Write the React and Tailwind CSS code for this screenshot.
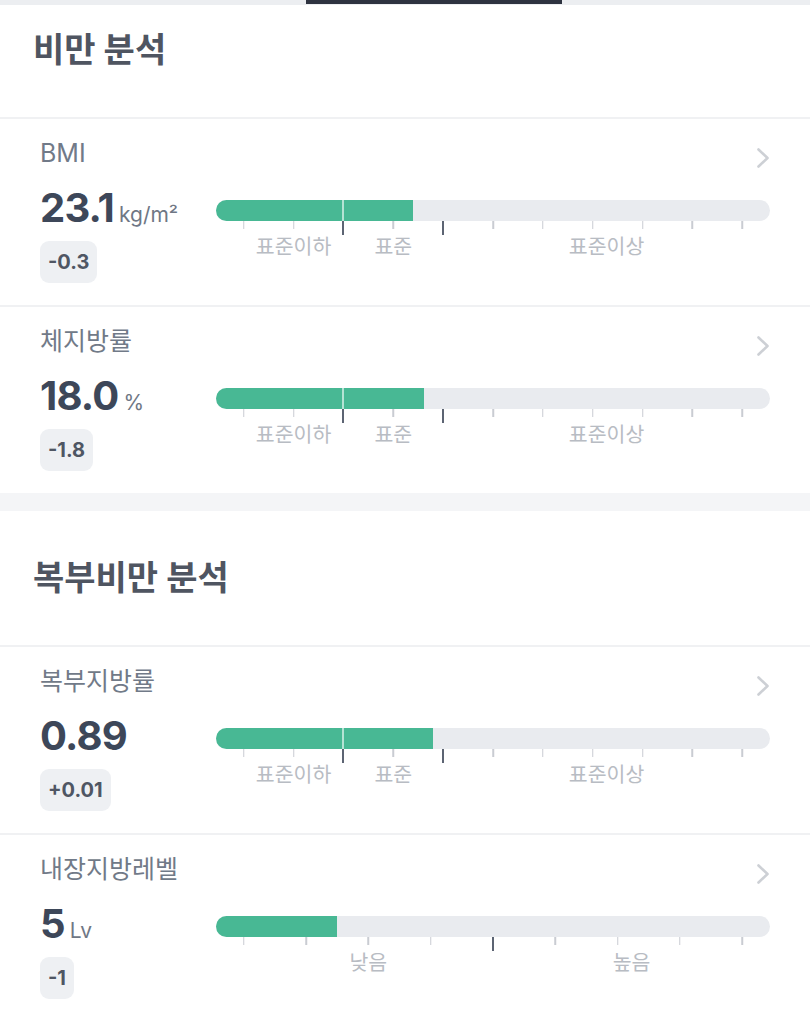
import React from 'react';

const STD_TICKS = [5, 14, 23, 32, 41, 50, 59, 68, 77, 86, 95];
const LEVEL_TICKS = [5, 16.25, 27.5, 38.75, 50, 61.25, 72.5, 83.75, 95];

const rows1 = [
  {
    label: 'BMI',
    value: '23.1',
    unit: 'kg/m²',
    diff: '-0.3',
    fill: 35.6,
    split: 23,
    ticks: STD_TICKS,
    dark: [23, 41],
    labels: [
      { text: '표준이하', at: 14 },
      { text: '표준', at: 32 },
      { text: '표준이상', at: 70.5 },
    ],
  },
  {
    label: '체지방률',
    value: '18.0',
    unit: '%',
    diff: '-1.8',
    fill: 37.5,
    split: 23,
    ticks: STD_TICKS,
    dark: [23, 41],
    labels: [
      { text: '표준이하', at: 14 },
      { text: '표준', at: 32 },
      { text: '표준이상', at: 70.5 },
    ],
  },
];

const rows2 = [
  {
    label: '복부지방률',
    value: '0.89',
    unit: '',
    diff: '+0.01',
    fill: 39.2,
    split: 23,
    ticks: STD_TICKS,
    dark: [23, 41],
    labels: [
      { text: '표준이하', at: 14 },
      { text: '표준', at: 32 },
      { text: '표준이상', at: 70.5 },
    ],
  },
  {
    label: '내장지방레벨',
    value: '5',
    unit: 'Lv',
    diff: '-1',
    fill: 21.8,
    split: null,
    ticks: LEVEL_TICKS,
    dark: [50],
    labels: [
      { text: '낮음', at: 27.5 },
      { text: '높음', at: 75 },
    ],
  },
];

const Chevron = () => (
  <svg width="14" height="22" viewBox="0 0 14 22" fill="none" className="translate-y-[5px]">
    <path d="M2.5 2.5 L11.5 11 L2.5 19.5" stroke="#cdd0d5" strokeWidth="2.6" strokeLinecap="round" strokeLinejoin="round" />
  </svg>
);

const Gauge = ({ fill, split, ticks, dark, labels }) => (
  <div className="relative flex-1 h-[21px]">
    <div className="relative h-full rounded-full bg-[#e9ebef] overflow-hidden">
      <div className="h-full bg-[#48b894]" style={{ width: `${fill}%` }} />
      {split && (
        <div
          className="absolute top-0 h-full w-[2px] -translate-x-1/2 bg-white/60"
          style={{ left: `${split}%` }}
        />
      )}
    </div>
    {ticks.map((t) => (
      <div
        key={t}
        className={
          dark.includes(t)
            ? 'absolute top-full w-[2px] h-[14px] -translate-x-1/2 bg-[#5c6473]'
            : 'absolute top-full w-[1.5px] h-[8px] -translate-x-1/2 bg-[#c9ccd2]'
        }
        style={{ left: `${t}%` }}
      />
    ))}
    {labels.map((l) => (
      <span
        key={l.text}
        className="absolute top-[36px] -translate-x-1/2 whitespace-nowrap text-[20.5px] leading-[22px] text-[#b8bcc3]"
        style={{ left: `${l.at}%` }}
      >
        {l.text}
      </span>
    ))}
  </div>
);

const MetricRow = ({ row }) => (
  <div className="h-[188px] border-t-2 border-[#f0f1f3] px-[40px] pt-[19px]">
    <div className="flex h-[30px] items-center justify-between">
      <span className="text-[25px] leading-[30px] text-[#717a88]">{row.label}</span>
      <Chevron />
    </div>
    <div className="mt-[22px] flex h-[40px] items-center">
      <div className="flex w-[176px] shrink-0 items-baseline gap-[5px] mb-[5px]">
        <span className="text-[40px] leading-[40px] font-bold tracking-[-0.8px] text-[#3d4759]">
          {row.value}
        </span>
        {row.unit && (
          <span className="text-[21px] leading-[20px] text-[#6f7785]">{row.unit}</span>
        )}
      </div>
      <Gauge {...row} />
    </div>
    <div className="mt-[11px] inline-flex h-[42px] items-center rounded-[9px] bg-[#eef0f3] px-[8px] text-[20px] font-bold text-[#4f5663]">
      {row.diff}
    </div>
  </div>
);

export default function App() {
  return (
    <div className="w-[810px] h-[1018px] overflow-hidden bg-white font-[Inter,'Noto_Sans_CJK_KR',sans-serif]">
      <div className="h-[5px] bg-[#eceef1]">
        <div className="ml-[306px] h-[4px] w-[256px] bg-[#2e3340]" />
      </div>

      <div className="h-[112px] px-[33px] pt-[24px]">
        <h2 className="text-[34px] leading-[42px] font-bold text-[#4f5561]">비만 분석</h2>
      </div>
      {rows1.map((r) => (
        <MetricRow key={r.label} row={r} />
      ))}

      <div className="h-[18px] bg-[#f4f5f7]" />

      <div className="h-[134px] px-[33px] pt-[46px]">
        <h2 className="text-[34px] leading-[42px] font-bold text-[#4f5561]">복부비만 분석</h2>
      </div>
      {rows2.map((r) => (
        <MetricRow key={r.label} row={r} />
      ))}
    </div>
  );
}
